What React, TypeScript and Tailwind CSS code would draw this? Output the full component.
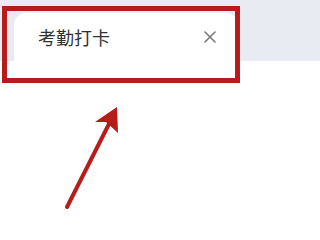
import { JSX } from "react";

export default function App(): JSX.Element {
  return (
    <div className="relative w-[320px] h-[240px] bg-white overflow-hidden" style={{ fontFamily: '"Noto Sans CJK SC", "Noto Sans", sans-serif' }}>
      {/* tab bar */}
      <div className="h-[61px] bg-[#e9ebf3] pt-[13px] pl-[14px]">
        <div className="w-[224px] h-[48px] bg-white rounded-t-[12px] flex items-center pl-[24px] pr-[20px]">
          <span className="text-[18px] leading-none text-[#303133]">考勤打卡</span>
          <span className="ml-auto mr-[2px] text-[#7a7a7a]">
            <svg width="12" height="12" viewBox="0 0 12 12" fill="none" stroke="currentColor" strokeWidth="1.6" strokeLinecap="round">
              <path d="M1 1L11 11M11 1L1 11" />
            </svg>
          </span>
        </div>
      </div>

      {/* annotation */}
      <div className="absolute left-[2px] top-[6px] w-[238px] h-[77px] border-[5px] border-[#b71b1a]" />
      <svg className="absolute left-0 top-0" width="320" height="240" viewBox="0 0 320 240">
        <path d="M67 207L112 118" stroke="#b71b1a" strokeWidth="4" strokeLinecap="round" />
        <path d="M117 107L95 122L106 122L118 133Z" fill="#b71b1a" />
      </svg>
    </div>
  );
}
